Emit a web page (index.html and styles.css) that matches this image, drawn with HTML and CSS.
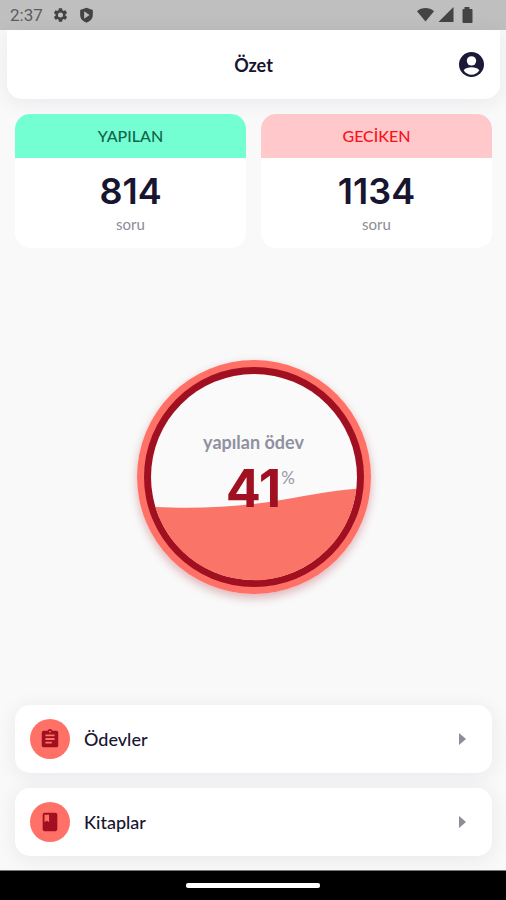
FILE: index.html
```html
<!DOCTYPE html>
<html lang="tr">
<head>
<meta charset="utf-8">
<meta name="viewport" content="width=device-width, initial-scale=1">
<title>Özet</title>
<link rel="stylesheet" href="styles.css">
</head>
<body>
<div class="status">
  <span class="status-time">2:37</span>
  <svg class="status-icon" viewBox="0 0 24 24"><path fill-rule="evenodd" d="M19.400 13a7.500 7.500 0 0 0 0-2l2.100-1.600c.2-.2.3-.5.100-.7l-2-3.500c-.1-.2-.4-.3-.6-.2l-2.500 1a7.300 7.300 0 0 0-1.700-1l-.4-2.600c0-.2-.2-.4-.5-.4h-4c-.2 0-.4.2-.5.4L9.100 5c-.6.300-1.200.6-1.700 1l-2.500-1c-.2-.1-.5 0-.6.2l-2 3.500c-.1.200-.1.500.1.700L4.600 11a8 8 0 0 0 0 2l-2.200 1.600c-.2.200-.2.400-.1.700l2 3.400c.1.300.4.300.6.300l2.500-1c.5.400 1.100.700 1.700 1l.4 2.600c0 .2.200.4.500.4h4c.2 0 .4-.2.500-.4l.4-2.600c.6-.3 1.200-.6 1.700-1l2.500 1c.2.100.5 0 .6-.2l2-3.500c.1-.2.100-.5-.1-.7zM12 15.800a3.800 3.800 0 1 1 0-7.600 3.800 3.800 0 0 1 0 7.600z"/></svg>
  <svg class="status-icon" viewBox="0 0 24 24"><path fill-rule="evenodd" d="M12 1 2.500 4.500V12c0 5.500 4 9.500 9.500 11.500 5.500-2 9.500-6 9.500-11.500V4.500zM8.500 6.500l8 5.500-8 5.500z"/></svg>
  <svg class="status-icon status-wifi" viewBox="0 0 18 16"><path d="M0 4C5-.5 13-.5 18 4L9 15z"/></svg>
  <svg class="status-icon" viewBox="0 0 16 16"><path d="M15 0v15H0z"/></svg>
  <svg class="status-icon" viewBox="0 0 16 16"><path d="M5 0h5v2h2q1 0 1 1v12q0 1-1 1H4q-1 0-1-1V3q0-1 1-1h1z"/></svg>
</div>

<header class="header">
  <h1 class="title">Özet</h1>
  <button class="profile" type="button" aria-label="Profil">
    <svg viewBox="0 0 24 24"><circle cx="12" cy="12" r="12"/><circle class="cut" cx="12" cy="8.500" r="4.500"/><path class="cut" d="M4.500 17.500C6 15.500 9 14.700 12 14.700s6 .8 7.500 2.800c-1.600 2.700-4.400 4.300-7.500 4.300s-5.900-1.600-7.500-4.300z"/></svg>
  </button>
</header>

<main class="content">
  <section class="stats">
    <article class="card">
      <h2 class="card-head done">YAPILAN</h2>
      <p class="count">814</p>
      <p class="unit">soru</p>
    </article>
    <article class="card">
      <h2 class="card-head late">GECİKEN</h2>
      <p class="count">1134</p>
      <p class="unit">soru</p>
    </article>
  </section>

  <section class="progress">
    <div class="gauge">
      <svg class="gauge-art" viewBox="0 0 234 234">
        <circle cx="117" cy="117" r="117" fill="#ff7067"/>
        <circle cx="117" cy="117" r="110" fill="#a01021"/>
        <circle cx="117" cy="117" r="103" fill="#fafafa"/>
        <path fill="#fa7468" d="M18.400 147C52 148.500 92 148 132 142 166 136.500 190 131 219.400 128.700A103 103 0 0 1 18.400 147z"/>
      </svg>
      <div class="gauge-text">
        <p class="gauge-label">yapılan ödev</p>
        <p class="gauge-value">41<span class="percent">%</span></p>
      </div>
    </div>
  </section>

  <nav class="menu">
    <a class="item" href="#odevler">
      <span class="item-icon"><svg viewBox="0 0 24 24"><path fill-rule="evenodd" d="M19 3h-4.200a3 3 0 0 0-5.600 0H5a2 2 0 0 0-2 2v14c0 1.100.9 2 2 2h14a2 2 0 0 0 2-2V5a2 2 0 0 0-2-2zm-7 0a1 1 0 1 1 0 2 1 1 0 0 1 0-2zm2 14H7v-2h7zm3-4H7v-2h10zm0-4H7V7h10z"/></svg></span>
      <span class="item-label">Ödevler</span>
      <svg class="arrow" viewBox="0 0 7 12"><path d="M0 0v12l7-6z"/></svg>
    </a>
    <a class="item" href="#kitaplar">
      <span class="item-icon"><svg viewBox="0 0 24 24"><path fill-rule="evenodd" d="M18 2H6a2 2 0 0 0-2 2v16c0 1.100.9 2 2 2h12a2 2 0 0 0 2-2V4a2 2 0 0 0-2-2zM6 4h5v8l-2.500-1.500L6 12z"/></svg></span>
      <span class="item-label">Kitaplar</span>
      <svg class="arrow" viewBox="0 0 7 12"><path d="M0 0v12l7-6z"/></svg>
    </a>
  </nav>
</main>

<footer class="system"><span class="handle"></span></footer>
</body>
</html>
```
FILE: styles.css
```css
* {
  box-sizing: border-box;
}

body {
  margin: 0;
  min-height: 100vh;
  display: flex;
  flex-direction: column;
  background: #f9f9f9;
  color: #17152f;
  font-family: Lato, "Noto Sans", sans-serif;
}

h1, h2, p {
  margin: 0;
}

svg {
  display: block;
}

.status {
  display: flex;
  align-items: center;
  gap: 9px;
  height: 30px;
  padding: 0 30px 0 10px;
  background: #bfbfbf;
  color: #5c5c5c;
  fill: #444;
}

.status-time {
  font: 17px/30px Roboto, sans-serif;
}

.status-icon {
  width: 17px;
  height: 16px;
}

.status-wifi {
  margin-left: auto;
}

.status-wifi ~ .status-icon {
  margin-left: -5px;
}

.header {
  display: grid;
  grid-template-columns: 1fr auto 1fr;
  align-items: center;
  height: 69px;
  margin: 0 6px 0 7px;
  padding: 0 16px;
  background: #fff;
  border-radius: 0 0 15px 15px;
  box-shadow: 0 3px 20px rgba(40, 40, 90, 0.08);
}

.title {
  grid-column: 2;
  font-size: 18px;
  line-height: 24px;
}

.profile {
  justify-self: end;
  width: 25px;
  height: 25px;
  padding: 0;
  border: 0;
  background: none;
  fill: #1b1938;
}

.profile svg {
  width: 25px;
  height: 25px;
}

.cut {
  fill: #fff;
}

.content {
  flex: 1;
  display: flex;
  flex-direction: column;
  padding: 15px 14px 14px 15px;
}

.stats {
  display: grid;
  grid-template-columns: 1fr 1fr;
  gap: 15px;
}

.card {
  overflow: hidden;
  padding-bottom: 13px;
  background: #fff;
  border-radius: 15px;
  text-align: center;
}

.card-head {
  font-size: 16px;
  font-weight: 500;
  line-height: 44px;
}

.done {
  background: #73ffd2;
  color: #12644c;
}

.late {
  background: #ffc8ca;
  color: #fb1018;
}

.count {
  padding-top: 10px;
  font-family: Inter, Lato, sans-serif;
  font-size: 36px;
  font-weight: 600;
  line-height: 46px;
}

.unit {
  color: #8d8c98;
  font-size: 15px;
  line-height: 21px;
}

.progress {
  flex: 1;
  display: flex;
  align-items: center;
  justify-content: center;
}

.gauge {
  position: relative;
  width: 234px;
  border-radius: 50%;
  box-shadow: 0 4px 10px rgba(160, 16, 33, 0.3);
}

.gauge-text {
  position: absolute;
  inset: 0;
  padding-top: 70px;
  text-align: center;
}

.gauge-label {
  color: #9090a0;
  font-size: 18px;
  font-weight: 700;
  line-height: 24px;
}

.gauge-value {
  position: relative;
  width: max-content;
  margin: 0 auto;
  color: #a01021;
  font-family: Inter, Lato, sans-serif;
  font-size: 52px;
  font-weight: 700;
  line-height: 70px;
}

.percent {
  position: absolute;
  top: 12px;
  left: 100%;
  color: #9797a3;
  font-family: Lato, sans-serif;
  font-size: 17px;
  font-weight: 400;
  line-height: 24px;
}

.menu {
  display: grid;
  gap: 15px;
}

.item {
  display: flex;
  align-items: center;
  gap: 14px;
  padding: 14px 26px 14px 15px;
  background: #fff;
  border-radius: 15px;
  box-shadow: 0 3px 20px rgba(40, 40, 90, 0.08);
  color: inherit;
  text-decoration: none;
}

.item-icon {
  display: grid;
  place-items: center;
  width: 40px;
  height: 40px;
  border-radius: 50%;
  background: #ff7067;
  fill: #a01021;
}

.item-icon svg {
  width: 22px;
  height: 22px;
}

.item-label {
  flex: 1;
  font-size: 18px;
  font-weight: 500;
  line-height: 24px;
}

.arrow {
  width: 7px;
  height: 12px;
  fill: #8d8d98;
}

.system {
  display: grid;
  place-items: center;
  height: 30px;
  border-top: 1px solid #777;
  background: #000;
}

.handle {
  width: 134px;
  height: 5px;
  border-radius: 2px;
  background: #fff;
}
```
